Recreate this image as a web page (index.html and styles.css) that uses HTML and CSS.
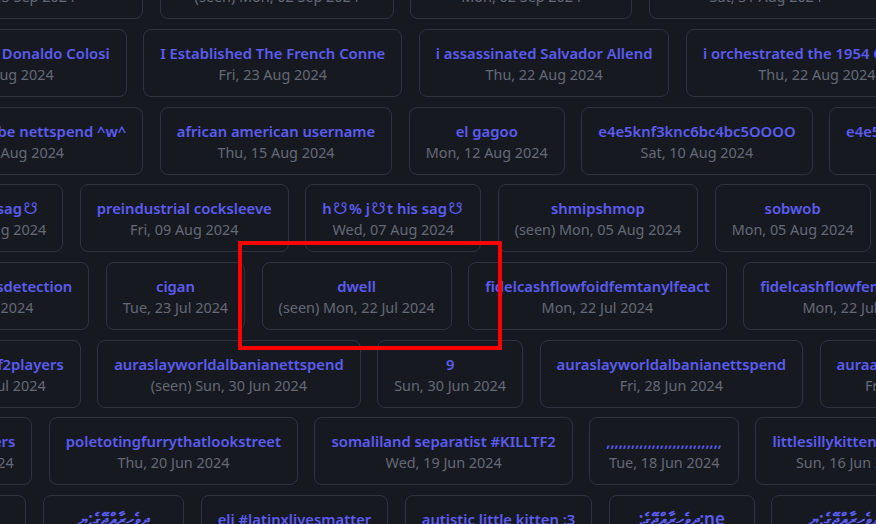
FILE: index.html
```html
<!DOCTYPE html>
<html lang="en">
<head>
<meta charset="utf-8">
<title>posts</title>
<link rel="stylesheet" href="styles.css">
</head>
<body>
<div class="grid">
  <div class="row r1">
    <div class="lead"><div class="card w250"><div class="t">hello world</div><div class="d">Tue, 03 Sep 2024</div></div></div>
    <div class="card w234"><div class="t">untitled</div><div class="d">(seen) Mon, 02 Sep 2024</div></div>
    <div class="card w222"><div class="t">untitled</div><div class="d">Mon, 02 Sep 2024</div></div>
    <div class="card w234"><div class="t">untitled</div><div class="d">Sat, 31 Aug 2024</div></div>
  </div>
  <div class="row r2">
    <div class="lead"><div class="card"><div class="t">i murdered Luis Donaldo Colosi</div><div class="d">Sat, 24 Aug 2024</div></div></div>
    <div class="card"><div class="t">I Established The French Conne</div><div class="d">Fri, 23 Aug 2024</div></div>
    <div class="card"><div class="t">i assassinated Salvador Allend</div><div class="d">Thu, 22 Aug 2024</div></div>
    <div class="card"><div class="t">i orchestrated the 1954 Guatem</div><div class="d">Thu, 22 Aug 2024</div></div>
  </div>
  <div class="row r3">
    <div class="lead"><div class="card"><div class="t">maybe i could be nettspend ^w^</div><div class="d">Fri, 16 Aug 2024</div></div></div>
    <div class="card"><div class="t">african american username</div><div class="d">Thu, 15 Aug 2024</div></div>
    <div class="card"><div class="t">el gagoo</div><div class="d">Mon, 12 Aug 2024</div></div>
    <div class="card"><div class="t">e4e5knf3knc6bc4bc5OOOO</div><div class="d">Sat, 10 Aug 2024</div></div>
    <div class="card"><div class="t">e4e5knf3knc6bc4bc5OOOOO</div><div class="d">Sat, 10 Aug 2024</div></div>
  </div>
  <div class="row r4">
    <div class="lead"><div class="card"><div class="t">j<span class="sym">☋</span>t his sag<span class="sym">☋</span></div><div class="d">Sat, 10 Aug 2024</div></div></div>
    <div class="card"><div class="t">preindustrial cocksleeve</div><div class="d">Fri, 09 Aug 2024</div></div>
    <div class="card"><div class="t">h<span class="sym">☋</span>% j<span class="sym">☋</span>t his sag<span class="sym">☋</span></div><div class="d">Wed, 07 Aug 2024</div></div>
    <div class="card"><div class="t">shmipshmop</div><div class="d">(seen) Mon, 05 Aug 2024</div></div>
    <div class="card"><div class="t">sobwob</div><div class="d">Mon, 05 Aug 2024</div></div>
    <div class="card"><div class="t">sobwob</div><div class="d">Mon, 05 Aug 2024</div></div>
  </div>
  <div class="row r5">
    <div class="lead"><div class="card"><div class="t">tf2botanticheatsdetection</div><div class="d">Wed, 24 Jul 2024</div></div></div>
    <div class="card"><div class="t">cigan</div><div class="d">Tue, 23 Jul 2024</div></div>
    <div class="card"><div class="t">dwell</div><div class="d">(seen) Mon, 22 Jul 2024</div></div>
    <div class="card"><div class="t">fidelcashflowfoidfemtanylfeact</div><div class="d">Mon, 22 Jul 2024</div></div>
    <div class="card"><div class="t">fidelcashflowfemtanylfeact</div><div class="d">Mon, 22 Jul 2024</div></div>
  </div>
  <div class="row r6">
    <div class="lead"><div class="card"><div class="t">iloveallthetf2players</div><div class="d">Mon, 01 Jul 2024</div></div></div>
    <div class="card"><div class="t">auraslayworldalbanianettspend</div><div class="d">(seen) Sun, 30 Jun 2024</div></div>
    <div class="card"><div class="t">9</div><div class="d">Sun, 30 Jun 2024</div></div>
    <div class="card"><div class="t">auraslayworldalbanianettspend</div><div class="d">Fri, 28 Jun 2024</div></div>
    <div class="card"><div class="t">auraalbanianettspend</div><div class="d">Fri, 28 Jun 2024</div></div>
  </div>
  <div class="row r7">
    <div class="lead"><div class="card"><div class="t">ihateallsnipers</div><div class="d">Fri, 21 Jun 2024</div></div></div>
    <div class="card"><div class="t">poletotingfurrythatlookstreet</div><div class="d">Thu, 20 Jun 2024</div></div>
    <div class="card"><div class="t">somaliland separatist #KILLTF2</div><div class="d">Wed, 19 Jun 2024</div></div>
    <div class="card"><div class="t">,,,,,,,,,,,,,,,,,,,,,,,,,,,,</div><div class="d">Tue, 18 Jun 2024</div></div>
    <div class="card"><div class="t">littlesillykittenfemboy</div><div class="d">Sun, 16 Jun 2024</div></div>
  </div>
  <div class="row r8">
    <div class="lead"><div class="card"><div class="t th">ދިވެހިރާއްޖޭގެ</div><div class="d">Sat, 15 Jun 2024</div></div></div>
    <div class="card"><div class="t th">ދިވެހިރާއްޖޭގެ:ޔ</div><div class="d">Sat, 15 Jun 2024</div></div>
    <div class="card"><div class="t">eli #latinxlivesmatter</div><div class="d">Fri, 14 Jun 2024</div></div>
    <div class="card"><div class="t">autistic little kitten :3</div><div class="d">Fri, 14 Jun 2024</div></div>
    <div class="card"><div class="t th">:ދިވެހިރާއްޖޭގެ:ne</div><div class="d">Thu, 13 Jun 2024</div></div>
    <div class="card"><div class="t th">ދިވެހިރާއްޖޭގެ:ޔ</div><div class="d">Thu, 13 Jun 2024</div></div>
  </div>
</div>
<div class="highlight"></div>
</body>
</html>
```
FILE: styles.css
```css
html, body {
  margin: 0;
  padding: 0;
  background: #171921;
  overflow: hidden;
  width: 876px;
  height: 524px;
}
body {
  position: relative;
  font-family: "Noto Sans", "Open Sans", "DejaVu Sans", sans-serif;
}
.grid {
  display: flex;
  flex-direction: column;
  gap: 9.67px;
  margin-top: -48.67px;
}
.row {
  display: flex;
  gap: 16.5px;
  flex-wrap: nowrap;
}
.lead {
  display: flex;
  justify-content: flex-end;
  flex-shrink: 0;
}
.r1 .lead { width: 143.3px; }
.r2 .lead { width: 126.7px; }
.r3 .lead { width: 143.3px; }
.r4 .lead { width: 63.3px; }
.r5 .lead { width: 89.3px; }
.r6 .lead { width: 80.7px; }
.r7 .lead { width: 32.3px; }
.r8 .lead { width: 26.3px; }
.card {
  flex-shrink: 0;
  box-sizing: border-box;
  height: 68px;
  padding: 11px 16px;
  border: 1px solid #2f333e;
  border-radius: 8px;
  text-align: center;
  white-space: nowrap;
}
.w250 { width: 250px; }
.w234 { width: 234px; }
.w222 { width: 222px; }
.t {
  color: #5b5cf0;
  font-size: 14.8px;
  font-weight: 600;
  line-height: 24px;
}
.th {
  font-size: 17px;
}
.sym {
  display: inline-block;
  margin: 0 1.5px;
  font-size: 16px;
  line-height: 1;
}
.d {
  color: #646976;
  font-size: 14.4px;
  line-height: 20px;
}
.highlight {
  position: absolute;
  left: 237.5px;
  top: 241px;
  width: 264px;
  height: 108.5px;
  box-sizing: border-box;
  border: 4px solid #ff0000;
}
```
